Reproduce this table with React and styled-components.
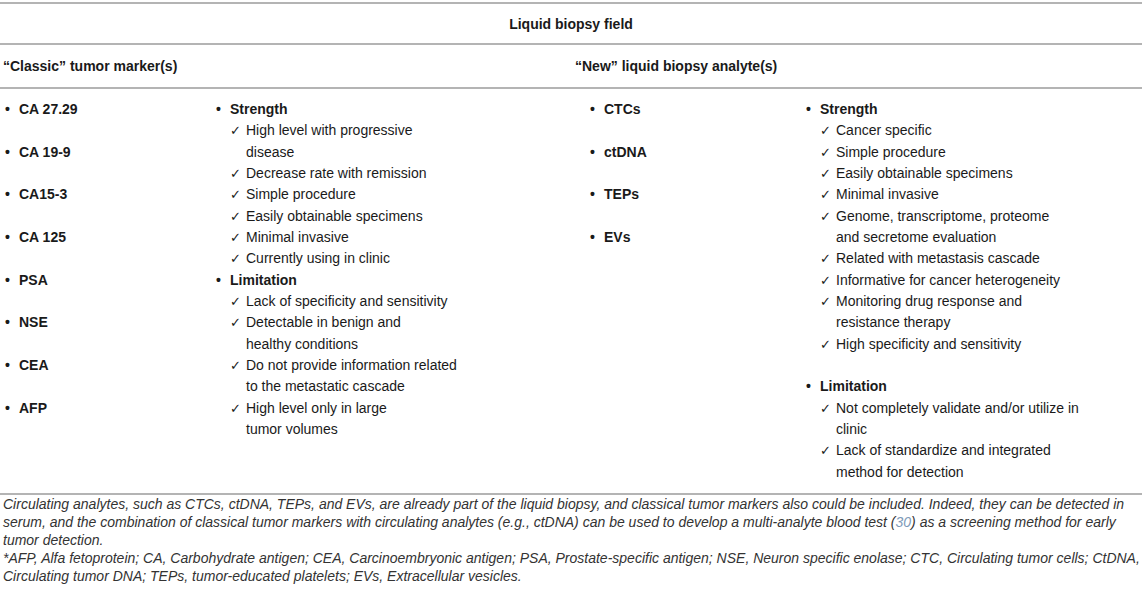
import React from 'react';
import styled, { createGlobalStyle } from 'styled-components';

const GlobalStyle = createGlobalStyle`
  body {
    margin: 0;
    background: #fff;
    font-family: 'Liberation Sans', Arial, sans-serif;
    color: #1a1a1a;
  }
`;

const Table = styled.div`
  width: 1142px;
  padding-top: 2px;
`;

const Rule = styled.div`
  height: 2px;
  background: #b4b4b4;
`;

const TitleRow = styled.div`
  height: 39px;
  display: flex;
  align-items: center;
  justify-content: center;
  font-weight: bold;
  font-size: 14px;
`;

const GroupRow = styled.div`
  height: 42px;
  display: grid;
  grid-template-columns: 572px 1fr;
  align-items: center;
  font-weight: bold;
  font-size: 14px;
`;

const GroupCell = styled.div`
  padding-left: 3px;
`;

const Body = styled.div`
  display: grid;
  grid-template-columns: 200px 372px 228px 1fr;
  padding: 10px 0 10px;
  font-size: 14px;
  line-height: 21.33px;
`;

const Column = styled.div`
  padding-left: ${({ indent }) => indent}px;
  display: flex;
  flex-direction: column;
  gap: ${({ gap }) => gap || 0}px;
`;

const Bullet = styled.div`
  display: flex;
  font-weight: bold;
  margin-top: ${({ spaced }) => (spaced ? '21.33px' : '0')};

  &::before {
    content: '•';
    width: 14px;
    flex-shrink: 0;
  }
`;

const Check = styled.div`
  display: flex;
  padding-left: 14px;
  white-space: pre-line;

  &::before {
    content: '✓';
    font-family: 'DejaVu Sans', sans-serif;
    font-size: 13px;
    width: 16px;
    flex-shrink: 0;
  }
`;

const Note = styled.div`
  font-style: italic;
  font-size: 14px;
  line-height: 18px;
  color: #333;
  padding: 0 0 0 3px;
  white-space: pre;
  overflow: hidden;
`;

const Ref = styled.span`
  color: #7d9ab8;
`;

const classic = ['CA 27.29', 'CA 19-9', 'CA15-3', 'CA 125', 'PSA', 'NSE', 'CEA', 'AFP'];
const analytes = ['CTCs', 'ctDNA', 'TEPs', 'EVs'];

const classicProps = [
  {
    title: 'Strength',
    items: [
      'High level with progressive\ndisease',
      'Decrease rate with remission',
      'Simple procedure',
      'Easily obtainable specimens',
      'Minimal invasive',
      'Currently using in clinic',
    ],
  },
  {
    title: 'Limitation',
    items: [
      'Lack of specificity and sensitivity',
      'Detectable in benign and\nhealthy conditions',
      'Do not provide information related\nto the metastatic cascade',
      'High level only in large\ntumor volumes',
    ],
  },
];

const newProps = [
  {
    title: 'Strength',
    items: [
      'Cancer specific',
      'Simple procedure',
      'Easily obtainable specimens',
      'Minimal invasive',
      'Genome, transcriptome, proteome\nand secretome evaluation',
      'Related with metastasis cascade',
      'Informative for cancer heterogeneity',
      'Monitoring drug response and\nresistance therapy',
      'High specificity and sensitivity',
    ],
  },
  {
    title: 'Limitation',
    spaced: true,
    items: [
      'Not completely validate and/or utilize in\nclinic',
      'Lack of standardize and integrated\nmethod for detection',
    ],
  },
];

const PropList = ({ groups, indent }) => (
  <Column indent={indent}>
    {groups.map((group) => (
      <React.Fragment key={group.title}>
        <Bullet spaced={group.spaced}>{group.title}</Bullet>
        {group.items.map((item) => (
          <Check key={item}>{item}</Check>
        ))}
      </React.Fragment>
    ))}
  </Column>
);

const App = () => (
  <>
    <GlobalStyle />
    <Table>
      <Rule />
      <TitleRow>Liquid biopsy field</TitleRow>
      <Rule />
      <GroupRow>
        <GroupCell>“Classic” tumor marker(s)</GroupCell>
        <GroupCell>“New” liquid biopsy analyte(s)</GroupCell>
      </GroupRow>
      <Rule />
      <Body>
        <Column indent={5} gap={21.33}>
          {classic.map((m) => (
            <Bullet key={m}>{m}</Bullet>
          ))}
        </Column>
        <PropList groups={classicProps} indent={16} />
        <Column indent={18} gap={21.33}>
          {analytes.map((m) => (
            <Bullet key={m}>{m}</Bullet>
          ))}
        </Column>
        <PropList groups={newProps} indent={6} />
      </Body>
      <Rule />
      <Note>
        Circulating analytes, such as CTCs, ctDNA, TEPs, and EVs, are already part of the liquid biopsy, and classical tumor markers also could be included. Indeed, they can be detected in{'\n'}serum, and the combination of classical tumor markers with circulating analytes (e.g., ctDNA) can be used to develop a multi-analyte blood test (<Ref>30</Ref>) as a screening method for early{'\n'}tumor detection.{'\n'}*AFP, Alfa fetoprotein; CA, Carbohydrate antigen; CEA, Carcinoembryonic antigen; PSA, Prostate-specific antigen; NSE, Neuron specific enolase; CTC, Circulating tumor cells; CtDNA,{'\n'}Circulating tumor DNA; TEPs, tumor-educated platelets; EVs, Extracellular vesicles.
      </Note>
    </Table>
  </>
);

export default App;
